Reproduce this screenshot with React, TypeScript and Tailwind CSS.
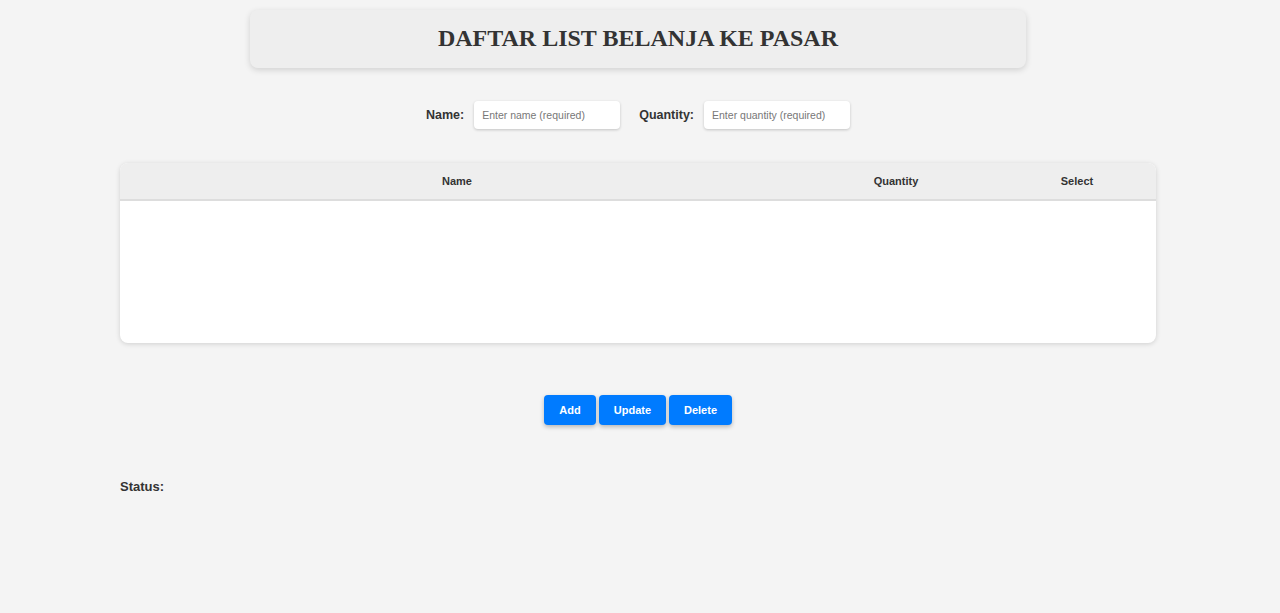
import React from "react";

export default function App() {
  return (
    <div className="min-h-[613px] w-full bg-[#f4f4f4] text-[#333] [font-family:'Liberation_Sans',Arial,sans-serif]">
      <div className="w-[1276px]">
        <div className="flex justify-center pt-[10px]">
          <div className="flex h-[58px] w-[776px] items-center justify-center rounded-lg bg-[#eeeeee] pb-[3px] shadow-[0_2px_6px_rgba(0,0,0,0.15)]">
            <h1 className="text-[24px] font-bold text-[#333] [font-family:'Liberation_Serif','Times_New_Roman',serif]">
              DAFTAR LIST BELANJA KE PASAR
            </h1>
          </div>
        </div>

        <div className="mt-[33px] flex items-center justify-center">
          <label className="mr-[10px] text-[12.5px] font-bold">Name:</label>
          <input
            className="h-[28px] w-[146px] rounded-[4px] bg-white px-[8px] text-[10.5px] shadow-[0_1px_3px_rgba(0,0,0,0.2)] outline-none placeholder:text-[#777]"
            placeholder="Enter name (required)"
          />
          <label className="ml-[19px] mr-[10px] text-[12.5px] font-bold">Quantity:</label>
          <input
            className="h-[28px] w-[146px] rounded-[4px] bg-white px-[8px] text-[10.5px] shadow-[0_1px_3px_rgba(0,0,0,0.2)] outline-none placeholder:text-[#777]"
            placeholder="Enter quantity (required)"
          />
        </div>

        <div className="mx-[120px] mt-[34px] h-[180px] overflow-hidden rounded-lg bg-white shadow-[0_1px_5px_rgba(0,0,0,0.15)]">
          <div className="flex h-[38px] items-center border-b-2 border-[#dddddd] bg-[#eeeeee] text-[11px] font-bold">
            <div className="w-[674px] text-center">Name</div>
            <div className="w-[204px] text-center">Quantity</div>
            <div className="flex-1 text-center">Select</div>
          </div>
        </div>

        <div className="mt-[52px] flex justify-center gap-[3px]">
          <button className="h-[30px] w-[52px] rounded-[4px] bg-[#007bff] text-[11px] font-bold text-white shadow-[0_2px_4px_rgba(0,0,0,0.25)]">
            Add
          </button>
          <button className="h-[30px] w-[67px] rounded-[4px] bg-[#007bff] text-[11px] font-bold text-white shadow-[0_2px_4px_rgba(0,0,0,0.25)]">
            Update
          </button>
          <button className="h-[30px] w-[63px] rounded-[4px] bg-[#007bff] text-[11px] font-bold text-white shadow-[0_2px_4px_rgba(0,0,0,0.25)]">
            Delete
          </button>
        </div>

        <div className="ml-[120px] mt-[52px] text-[13px] font-bold">Status:</div>
      </div>
    </div>
  );
}
